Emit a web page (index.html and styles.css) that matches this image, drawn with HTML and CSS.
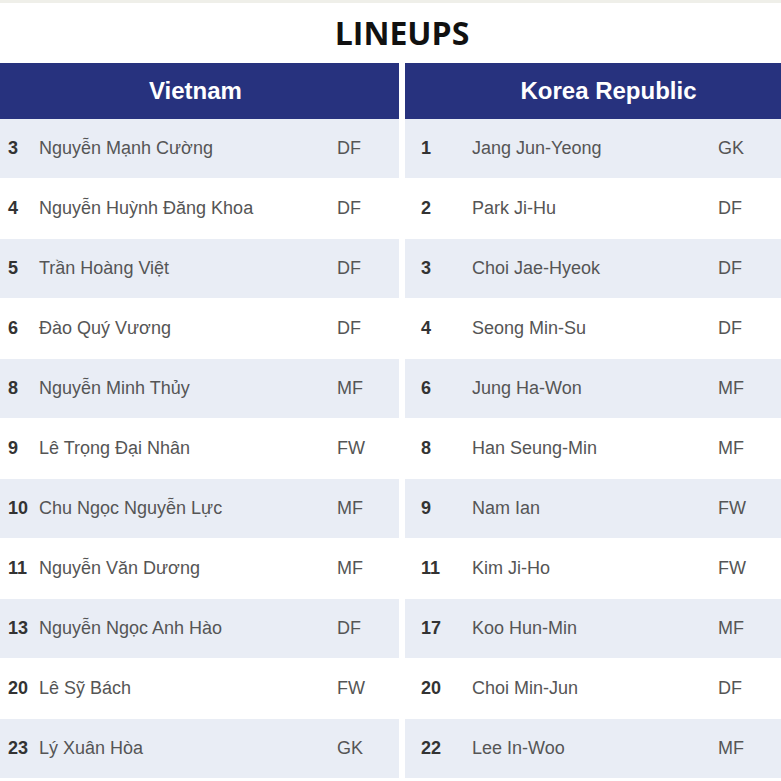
FILE: index.html
```html
<!DOCTYPE html>
<html>
<head>
<meta charset="utf-8">
<link rel="stylesheet" href="styles.css">
</head>
<body>
<div class="topstrip"></div>
<div class="page">
  <h1 class="title">LINEUPS</h1>
  <div class="tables">
    <div class="team team-left">
      <div class="head">Vietnam</div>
      <div class="row"><span class="num">3</span><span class="name">Nguyễn Mạnh Cường</span><span class="pos">DF</span></div>
      <div class="row"><span class="num">4</span><span class="name">Nguyễn Huỳnh Đăng Khoa</span><span class="pos">DF</span></div>
      <div class="row"><span class="num">5</span><span class="name">Trần Hoàng Việt</span><span class="pos">DF</span></div>
      <div class="row"><span class="num">6</span><span class="name">Đào Quý Vương</span><span class="pos">DF</span></div>
      <div class="row"><span class="num">8</span><span class="name">Nguyễn Minh Thủy</span><span class="pos">MF</span></div>
      <div class="row"><span class="num">9</span><span class="name">Lê Trọng Đại Nhân</span><span class="pos">FW</span></div>
      <div class="row"><span class="num">10</span><span class="name">Chu Ngọc Nguyễn Lực</span><span class="pos">MF</span></div>
      <div class="row"><span class="num">11</span><span class="name">Nguyễn Văn Dương</span><span class="pos">MF</span></div>
      <div class="row"><span class="num">13</span><span class="name">Nguyễn Ngọc Anh Hào</span><span class="pos">DF</span></div>
      <div class="row"><span class="num">20</span><span class="name">Lê Sỹ Bách</span><span class="pos">FW</span></div>
      <div class="row"><span class="num">23</span><span class="name">Lý Xuân Hòa</span><span class="pos">GK</span></div>
    </div>
    <div class="team team-right">
      <div class="head">Korea Republic</div>
      <div class="row"><span class="num">1</span><span class="name">Jang Jun-Yeong</span><span class="pos">GK</span></div>
      <div class="row"><span class="num">2</span><span class="name">Park Ji-Hu</span><span class="pos">DF</span></div>
      <div class="row"><span class="num">3</span><span class="name">Choi Jae-Hyeok</span><span class="pos">DF</span></div>
      <div class="row"><span class="num">4</span><span class="name">Seong Min-Su</span><span class="pos">DF</span></div>
      <div class="row"><span class="num">6</span><span class="name">Jung Ha-Won</span><span class="pos">MF</span></div>
      <div class="row"><span class="num">8</span><span class="name">Han Seung-Min</span><span class="pos">MF</span></div>
      <div class="row"><span class="num">9</span><span class="name">Nam Ian</span><span class="pos">FW</span></div>
      <div class="row"><span class="num">11</span><span class="name">Kim Ji-Ho</span><span class="pos">FW</span></div>
      <div class="row"><span class="num">17</span><span class="name">Koo Hun-Min</span><span class="pos">MF</span></div>
      <div class="row"><span class="num">20</span><span class="name">Choi Min-Jun</span><span class="pos">DF</span></div>
      <div class="row"><span class="num">22</span><span class="name">Lee In-Woo</span><span class="pos">MF</span></div>
    </div>
  </div>
</div>
</body>
</html>
```
FILE: styles.css
```css
html, body {
  margin: 0;
  padding: 0;
  background: #ffffff;
  overflow: hidden;
}
.topstrip {
  height: 3px;
  background: #efefe9;
}
.page {
  width: 820px;
  margin-left: -8px;
}
.title {
  margin: 0;
  height: 60px;
  line-height: 60px;
  text-align: center;
  font-family: "Open Sans", "Liberation Sans", sans-serif;
  font-weight: 700;
  font-size: 32px;
  color: #111111;
}
.tables {
  display: grid;
  grid-template-columns: 407px 407px;
  column-gap: 6px;
}
.team {
  font-family: "Liberation Sans", Arial, sans-serif;
}
.head {
  height: 56px;
  line-height: 56px;
  background: #27327e;
  color: #ffffff;
  font-weight: 700;
  font-size: 24px;
  text-align: center;
}
.row {
  display: grid;
  height: 59px;
  border-bottom: 1px solid #ffffff;
  align-items: center;
  font-size: 18px;
  color: #555555;
  background: #ffffff;
}
.row:nth-child(even) {
  background: #e9edf5;
}
.team-left .row {
  grid-template-columns: 47px 298px 1fr;
}
.team-right .row {
  grid-template-columns: 67px 246px 1fr;
}
.num {
  padding-left: 16px;
  font-weight: 700;
  color: #333333;
}
.name, .pos {
  white-space: nowrap;
}
```
